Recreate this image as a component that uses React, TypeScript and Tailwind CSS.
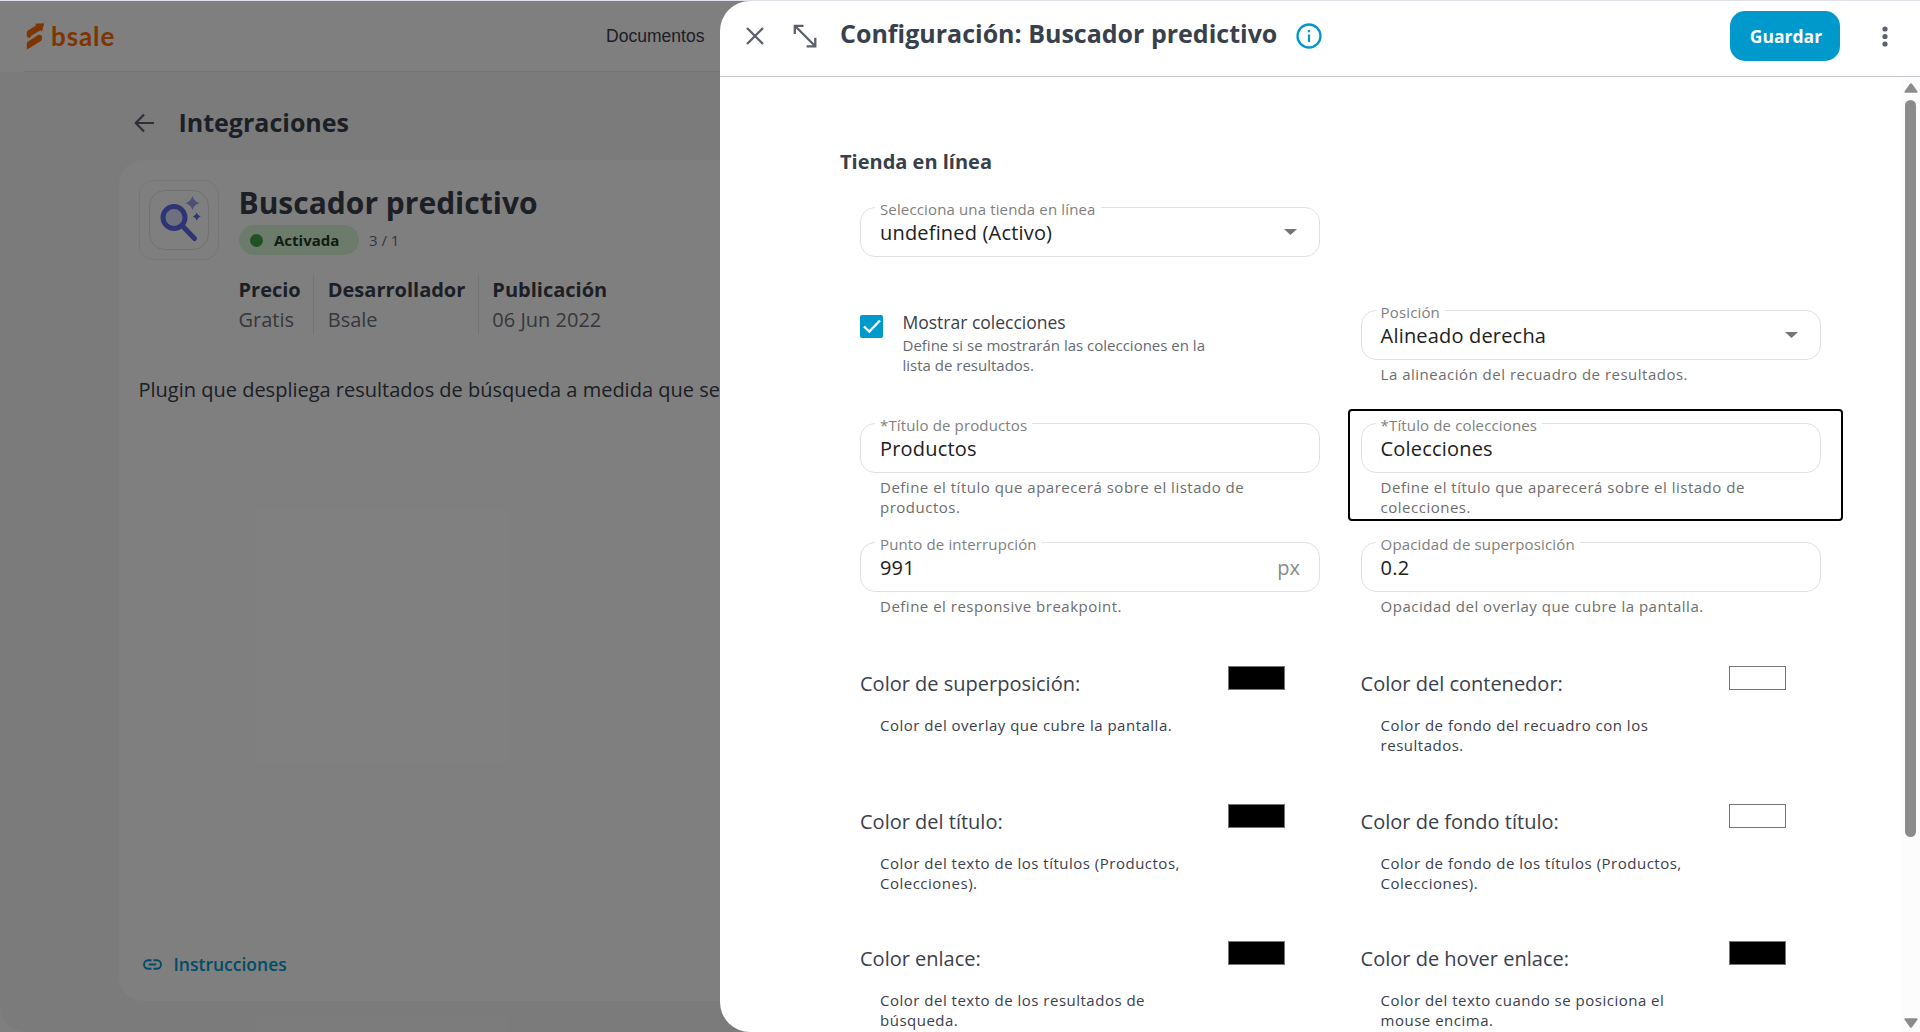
import type { ReactNode } from "react";

type FieldProps = {
  label: string;
  value: string;
  suffix?: string;
  select?: boolean;
  helper?: ReactNode;
};

function Field({ label, value, suffix, select, helper }: FieldProps) {
  return (
    <div className="w-[460px]">
      <fieldset className="relative flex h-[50px] items-center justify-between rounded-[15px] border border-[#e0e0e0] px-[19px]">
        <span className="absolute -top-[9px] left-[14px] bg-white px-[5px] text-[15px] leading-5 tracking-[0.14px] whitespace-nowrap text-[#808080]">
          {label}
        </span>
        <span className="pt-[2px] text-[20px] leading-7 tracking-[0.18px] text-[#212121]">{value}</span>
        {suffix && <span className="pt-[2px] text-[20px] leading-7 text-[#8a8a8a]">{suffix}</span>}
        {select && (
          <svg className="mr-[3px] h-[6px] w-[13px]" viewBox="0 0 13 6">
            <path d="M0 0h13L6.5 6z" fill="#757575" />
          </svg>
        )}
      </fieldset>
      {helper && (
        <p className="mt-[4px] pl-5 text-[15px] leading-5 tracking-[0.5px] whitespace-nowrap text-[#6e6e6e]">{helper}</p>
      )}
    </div>
  );
}

function ColorField({ label, black, children }: { label: string; black?: boolean; children: ReactNode }) {
  return (
    <div className="h-[137.5px] w-[460px]">
      <div className="flex h-[49px] items-start justify-between pr-[35px]">
        <span className="mt-[3px] text-[20px] leading-[30px] text-[#3b404d]">{label}</span>
        <span
          className={
            black ? "h-6 w-[57px] border border-[#767676] bg-black" : "h-6 w-[57px] border border-[#767676] bg-white"
          }
        />
      </div>
      <p className="pl-5 text-[15px] leading-5 tracking-[0.5px] whitespace-nowrap text-[#3b404d]">{children}</p>
    </div>
  );
}

function Logo() {
  return (
    <div className="flex items-center gap-[6px] text-[#ff6b00]">
      <svg className="h-[27px] w-[19px]" viewBox="0 0 19 27" fill="currentColor">
        <path d="M.8 13.200V9.600Q.8 8.200 2 7.400L10.300 2.200 9 .8 18.200.2 16 8.800 14.600 7.200 5.600 12.600 3.800 15Q1.200 14.800.8 13.200z" />
        <path d="M.8 26.500V21Q.8 19.400 2 18.600L12.500 11.800Q16 11.800 16 14.200V15.600Q16 17.200 14.800 18L4.800 24.200z" />
      </svg>
      <span className="font-['Lato',sans-serif] text-[26px] leading-[34px] font-bold tracking-[0.9px]">bsale</span>
    </div>
  );
}

function AppIcon() {
  return (
    <div className="flex size-[80px] shrink-0 items-center justify-center rounded-[15px] border border-[#ececec]">
      <div className="size-[60px] rounded-[16px] border border-[#e4e4e4]">
        <svg viewBox="0 0 58 58" className="size-[58px]">
          <circle cx="24" cy="26.500" r="11" fill="#dfe0ff" stroke="#5f6be8" strokeWidth="5" />
          <path d="M32.500 35l12 12.500" stroke="#5f6be8" strokeWidth="5" strokeLinecap="round" />
          <path d="M42.500 5q1.600 5.600 7 7-5.400 1.400-7 7-1.600-5.600-7-7 5.400-1.400 7-7z" fill="#9a9eea" />
          <path d="M46.700 21.500q.8 3.200 4 4-3.200.8-4 4-.8-3.200-4-4 3.200-.8 4-4z" fill="#5f6be8" />
        </svg>
      </div>
    </div>
  );
}

function Fact({ name, value, last }: { name: string; value: string; last?: boolean }) {
  return (
    <div className={last ? "h-[59px]" : "mr-[13.500px] h-[59px] border-r border-[#e6e6e6] pr-[12.500px]"}>
      <p className="text-[20px] leading-[30px] font-bold text-[#38404c]">{name}</p>
      <p className="text-[20px] leading-[30px] text-[#6b6f78]">{value}</p>
    </div>
  );
}

function Page() {
  return (
    <div className="flex h-full flex-col bg-white">
      <header className="flex h-[70px] shrink-0 items-center pl-[26px]">
        <div className="w-[580px]">
          <Logo />
        </div>
        <span className="mt-px font-['Liberation_Sans',Arial,sans-serif] text-[17.5px] tracking-[0.03px] text-[#38404c]">
          Documentos
        </span>
      </header>
      <div className="ml-6 h-px shrink-0 bg-[#ececec]" />
      <main className="flex-1 rounded-bl-[25px] bg-[#f7f7f7] pl-[119px]">
        <div className="flex h-[88px] items-center pt-[13px] pl-[15px]">
          <svg className="h-5 w-5" viewBox="0 0 20 20" fill="none" stroke="#5a6070" strokeWidth="2.200">
            <path d="M10 1.500L1.700 10l8.300 8.500M1.800 10H20" />
          </svg>
          <h2 className="ml-[24.500px] pb-px text-[25px] leading-[34px] font-bold text-[#38404c]">Integraciones</h2>
        </div>
        <section className="flex h-[841px] flex-col rounded-[25px] bg-white pt-5 pl-5">
          <div className="flex">
            <AppIcon />
            <div className="ml-[19.500px]">
              <h1 className="mt-[3px] text-[30px] leading-[40px] font-bold text-[#38404c]">Buscador predictivo</h1>
              <div className="mt-[2px] flex items-center">
                <span className="flex h-[30px] w-[120px] items-center rounded-full bg-[#daf6da] pl-[11px]">
                  <span className="size-[13px] rounded-full bg-[#43a047]" />
                  <span className="ml-[11.500px] text-[15px] font-bold text-[#1a3d1c]">Activada</span>
                </span>
                <span className="ml-[10.500px] text-[15px] text-[#6b6f78]">3 / 1</span>
              </div>
              <div className="mt-5 flex">
                <Fact name="Precio" value="Gratis" />
                <Fact name="Desarrollador" value="Bsale" />
                <Fact name="Publicación" value="06 Jun 2022" last />
              </div>
            </div>
          </div>
          <p className="mt-[41px] -ml-[0.500px] text-[20px] leading-[30px] whitespace-nowrap text-[#38404c]">
            Plugin que despliega resultados de búsqueda a medida que se escribe
          </p>
          <a className="mt-auto mb-[22px] flex items-center pl-[3.500px] text-[17.5px] leading-[30px] font-semibold text-[#0099cc]">
            <svg className="mr-[12px] h-[11px] w-[19px]" viewBox="0 0 19 11" fill="none" stroke="currentColor" strokeWidth="1.900">
              <path d="M8.500 1.300H5.200a4.200 4.200 0 0 0 0 8.400h3.300M10.500 1.300h3.300a4.200 4.200 0 0 1 0 8.400h-3.300M5.800 5.500h7.400" />
            </svg>
            Instrucciones
          </a>
        </section>
      </main>
    </div>
  );
}

function DrawerHeader() {
  return (
    <header className="flex h-[76px] shrink-0 items-center border-b border-[#c5c7d0] pb-[5px] pl-[26px]">
      <svg className="h-[18px] w-[18px]" viewBox="0 0 18 18" stroke="#5b606b" strokeWidth="2.300">
        <path d="M1 1l16 16M17 1L1 17" />
      </svg>
      <svg className="ml-[29px] h-6 w-6" viewBox="0 0 24 24" fill="none" stroke="#5b606b" strokeWidth="2.300">
        <path d="M1.800 10V1.800H10.500M1.800 1.800l20.500 20.500M13.600 22.300h8.700V13.800" />
      </svg>
      <h1 className="ml-[23px] pb-[6px] text-[25px] leading-[34px] font-bold whitespace-nowrap text-[#38404c]">
        Configuración: Buscador predictivo
      </h1>
      <svg className="ml-[19px] h-[26px] w-[26px]" viewBox="0 0 26 26" fill="#0099cc">
        <circle cx="13" cy="13" r="11.500" fill="none" stroke="#0099cc" strokeWidth="2.300" />
        <path d="M11.900 11.500h2.200V19h-2.200zM11.900 7h2.200v2.300h-2.200z" />
      </svg>
      <button className="mr-[42px] ml-auto h-[50px] w-[110px] rounded-[15px] bg-[#0099cc] pl-[2px] text-[17.5px] font-bold text-white">
        Guardar
      </button>
      <svg className="mr-[32px] h-[21px] w-[6px]" viewBox="0 0 6 21" fill="#5b606b">
        <circle cx="3" cy="3" r="2.600" />
        <circle cx="3" cy="10.500" r="2.600" />
        <circle cx="3" cy="18" r="2.600" />
      </svg>
    </header>
  );
}

function ScrollBar() {
  return (
    <div className="flex w-[19px] shrink-0 flex-col items-center bg-[#fcfcfc] pt-[6px] pb-1">
      <svg className="h-[10px] w-[14px]" viewBox="0 0 14 10" fill="#8b8b8b">
        <path d="M6 .8q1-1.200 2 0l5.400 7.400q.8 1.600-1 1.600H1.600q-1.800 0-1-1.600z" />
      </svg>
      <div className="mt-[7px] h-[737px] w-[11px] rounded-full bg-[#8b8b8b]" />
      <svg className="mt-auto h-[10px] w-[14px] rotate-180" viewBox="0 0 14 10" fill="#8b8b8b">
        <path d="M6 .8q1-1.200 2 0l5.400 7.400q.8 1.600-1 1.600H1.600q-1.800 0-1-1.600z" />
      </svg>
    </div>
  );
}

function Drawer() {
  return (
    <aside className="absolute inset-y-0 right-0 flex w-[1200px] flex-col overflow-hidden rounded-l-[30px] bg-white">
      <DrawerHeader />
      <div className="flex min-h-0 flex-1">
        <div className="flex-1 overflow-hidden pl-[120px]">
          <h2 className="mt-[70px] mb-[30px] text-[20px] leading-[30px] font-bold text-[#38404c]">Tienda en línea</h2>
          <div className="pl-5">
            <Field label="Selecciona una tienda en línea" value="undefined (Activo)" select />
            <div className="mt-[53px] grid grid-cols-[460px_460px] gap-x-[40.6px]">
              <div className="flex h-[113px]">
                <span className="mt-[5px] flex size-[23px] items-center justify-center rounded-[2px] bg-[#0099cc]">
                  <svg className="h-[15px] w-[18px]" viewBox="0 0 18 15" fill="none" stroke="white" strokeWidth="2.400">
                    <path d="M1 7.500l5.300 5L17 1.500" />
                  </svg>
                </span>
                <div className="ml-[19.500px] whitespace-nowrap">
                  <p className="text-[17.5px] leading-[25px] text-[#38404c]">Mostrar colecciones</p>
                  <p className="text-[15px] leading-5 text-[#666a73]">
                    Define si se mostrarán las colecciones en la
                    <br />
                    lista de resultados.
                  </p>
                </div>
              </div>
              <div className="h-[113px]">
                <Field
                  label="Posición"
                  value="Alineado derecha"
                  select
                  helper="La alineación del recuadro de resultados."
                />
              </div>
              <div className="h-[119px]">
                <Field
                  label="*Título de productos"
                  value="Productos"
                  helper={
                    <>
                      Define el título que aparecerá sobre el listado de
                      <br />
                      productos.
                    </>
                  }
                />
              </div>
              <div className="-mt-[14px] -mr-[22px] mb-[21px] -ml-[13px] h-[112px] rounded-[4px] border-2 border-black pt-[12px] pl-[11px]">
                <Field
                  label="*Título de colecciones"
                  value="Colecciones"
                  helper={
                    <>
                      Define el título que aparecerá sobre el listado de
                      <br />
                      colecciones.
                    </>
                  }
                />
              </div>
              <div className="h-[124px]">
                <Field label="Punto de interrupción" value="991" suffix="px" helper="Define el responsive breakpoint." />
              </div>
              <div className="h-[124px]">
                <Field label="Opacidad de superposición" value="0.2" helper="Opacidad del overlay que cubre la pantalla." />
              </div>
              <ColorField label="Color de superposición:" black>
                Color del overlay que cubre la pantalla.
              </ColorField>
              <ColorField label="Color del contenedor:">
                Color de fondo del recuadro con los
                <br />
                resultados.
              </ColorField>
              <ColorField label="Color del título:" black>
                Color del texto de los títulos (Productos,
                <br />
                Colecciones).
              </ColorField>
              <ColorField label="Color de fondo título:">
                Color de fondo de los títulos (Productos,
                <br />
                Colecciones).
              </ColorField>
              <ColorField label="Color enlace:" black>
                Color del texto de los resultados de
                <br />
                búsqueda.
              </ColorField>
              <ColorField label="Color de hover enlace:" black>
                Color del texto cuando se posiciona el
                <br />
                mouse encima.
              </ColorField>
            </div>
          </div>
        </div>
        <ScrollBar />
      </div>
    </aside>
  );
}

export default function App() {
  return (
    <div className="flex h-[1032px] w-[1920px] flex-col overflow-hidden font-['Open_Sans','Noto_Sans',sans-serif]">
      <div className="h-px shrink-0 bg-[#dfe0ec]" />
      <div className="relative min-h-0 flex-1 overflow-hidden">
        <Page />
        <div className="absolute inset-0 bg-black/50" />
        <Drawer />
      </div>
    </div>
  );
}
